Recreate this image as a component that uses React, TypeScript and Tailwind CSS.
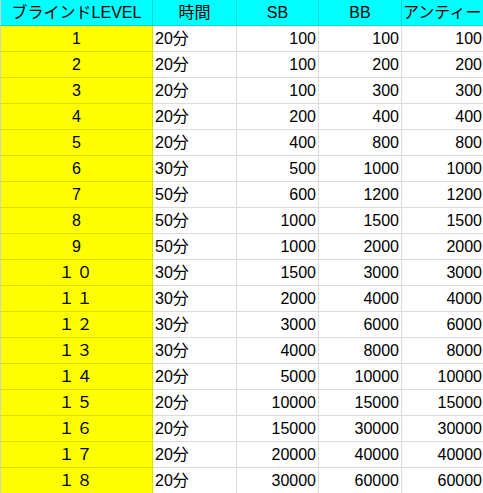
const rows: [string, string, number, number, number][] = [
  ["1", "20分", 100, 100, 100],
  ["2", "20分", 100, 200, 200],
  ["3", "20分", 100, 300, 300],
  ["4", "20分", 200, 400, 400],
  ["5", "20分", 400, 800, 800],
  ["6", "30分", 500, 1000, 1000],
  ["7", "50分", 600, 1200, 1200],
  ["8", "50分", 1000, 1500, 1500],
  ["9", "50分", 1000, 2000, 2000],
  ["１０", "30分", 1500, 3000, 3000],
  ["１１", "30分", 2000, 4000, 4000],
  ["１２", "30分", 3000, 6000, 6000],
  ["１３", "30分", 4000, 8000, 8000],
  ["１４", "20分", 5000, 10000, 10000],
  ["１５", "20分", 10000, 15000, 15000],
  ["１６", "20分", 15000, 30000, 30000],
  ["１７", "20分", 20000, 40000, 40000],
  ["１８", "20分", 30000, 60000, 60000],
]

const font = { fontFamily: '"Liberation Sans", "Noto Sans CJK JP", sans-serif' }

export default function App() {
  return (
    <div className="w-[483px] h-[493px] overflow-hidden bg-white text-[16px] text-black" style={font}>
      <div className="grid grid-cols-[153px_84px_82px_83px_120px] w-[522px]">
        <div className="h-[26px] bg-[#00ffff] border-l border-l-[#d0d0d0] border-r border-b border-[#00d8d8] flex items-end justify-center pb-[1px] leading-[22px] whitespace-nowrap">
          ブラインドLEVEL
        </div>
        <div className="h-[26px] bg-[#00ffff] border-r border-b border-[#00d8d8] flex items-end justify-center pb-[1px] leading-[22px]">
          時間
        </div>
        <div className="h-[26px] bg-[#00ffff] border-r border-b border-[#00d8d8] flex items-end justify-center pb-[1px] leading-[22px]">
          SB
        </div>
        <div className="h-[26px] bg-[#00ffff] border-r border-b border-[#00d8d8] flex items-end justify-center pb-[1px] leading-[22px]">
          BB
        </div>
        <div className="h-[26px] bg-[#00ffff] border-r border-b border-[#00d8d8] flex items-end pl-[1px] pb-[1px] leading-[22px] whitespace-nowrap">
          アンティー
        </div>
        {rows.map(([lv, t, sb, bb, ante]) => (
          <Row key={lv} lv={lv} t={t} sb={sb} bb={bb} ante={ante} />
        ))}
      </div>
    </div>
  )
}

function Row({ lv, t, sb, bb, ante }: { lv: string; t: string; sb: number; bb: number; ante: number }) {
  return (
    <>
      <div className="h-[26px] bg-[#ffff00] border-l border-l-[#d0d0d0] border-r border-b border-[#dede00] flex items-end justify-center pb-[1px] leading-[22px]">
        {lv.length > 1 ? <span className="tracking-[2px]">{lv}</span> : lv}
      </div>
      <div className="h-[26px] border-r border-b border-[#dcdcdc] flex items-end pl-[2px] pb-[1px] leading-[22px]">
        {t}
      </div>
      <div className="h-[26px] border-r border-b border-[#dcdcdc] flex items-end justify-end pr-[2px] pb-[1px] leading-[22px]">
        {sb}
      </div>
      <div className="h-[26px] border-r border-b border-[#dcdcdc] flex items-end justify-end pr-[2px] pb-[1px] leading-[22px]">
        {bb}
      </div>
      <div className="h-[26px] border-r border-b border-[#dcdcdc] flex items-end justify-end pr-[39px] pb-[1px] leading-[22px]">
        {ante}
      </div>
    </>
  )
}
